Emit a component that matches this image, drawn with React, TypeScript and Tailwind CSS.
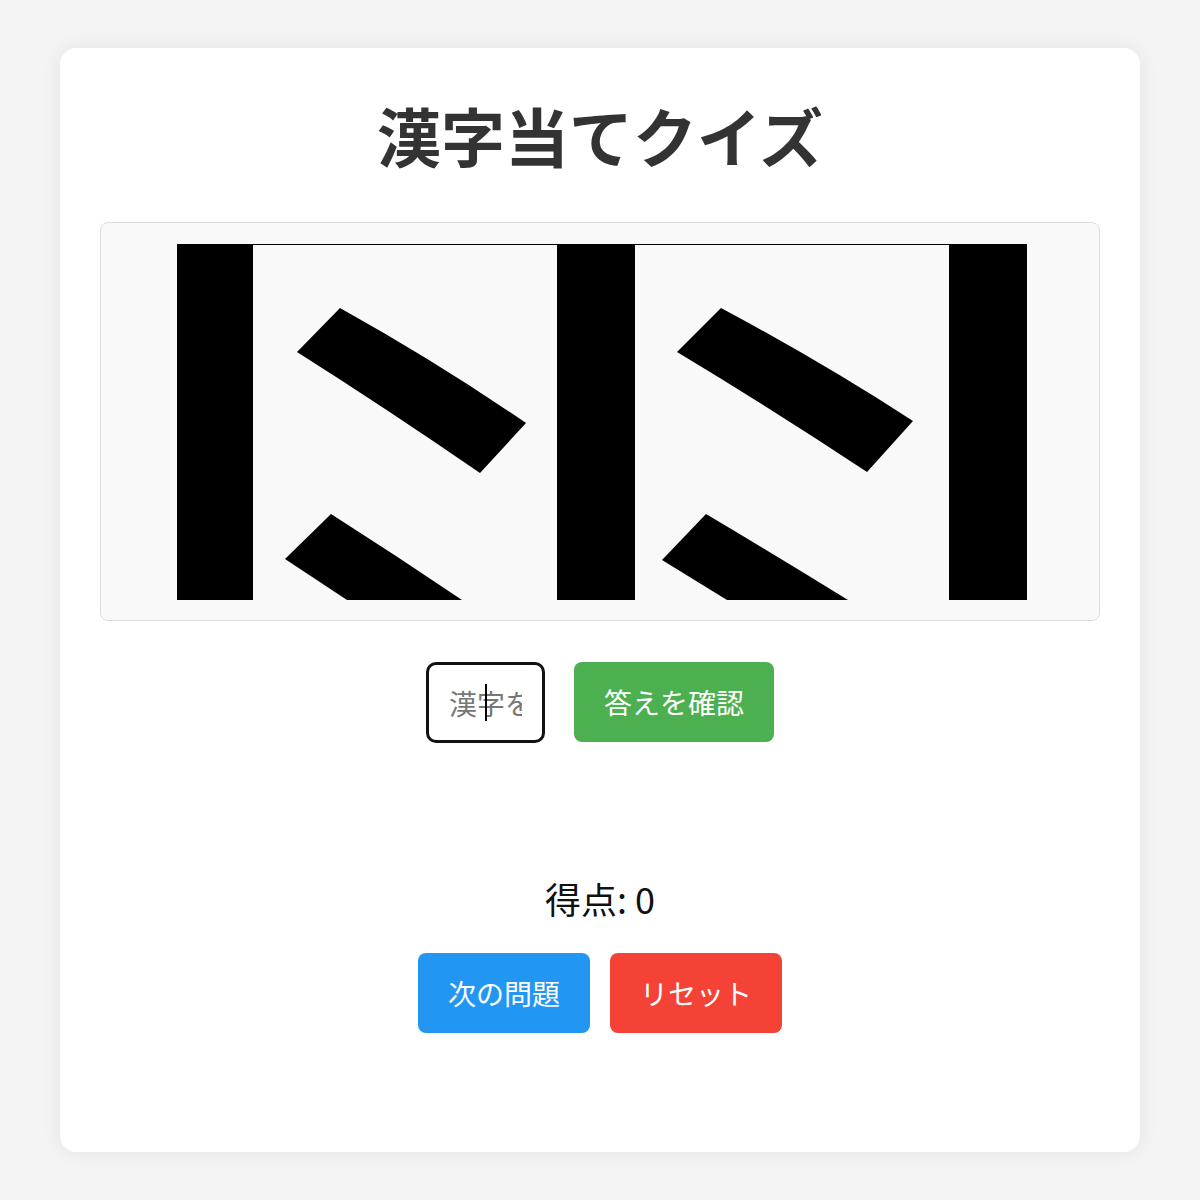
import React from "react";

const font = '"Noto Sans CJK JP", "Noto Sans", sans-serif';

function KanjiCanvas() {
  return (
    <svg width="850" height="356" viewBox="0 0 850 356" className="block ml-[4px]">
      <rect x="0" y="0" width="850" height="356" fill="#f9f9f9" />
      <rect x="0" y="0" width="850" height="1" fill="#000" />
      <rect x="0" y="0" width="76" height="356" fill="#000" />
      <rect x="380" y="0" width="78" height="356" fill="#000" />
      <rect x="772" y="0" width="78" height="356" fill="#000" />
      {/* left ticks */}
      <path d="M163 64 L120 108 Q210 165 303 229 L349 179 Q260 118 163 64 Z" fill="#000" />
      <path d="M154 270 L108 315 L170 356 L285 356 Q220 312 154 270 Z" fill="#000" />
      {/* right ticks */}
      <path d="M544 64 L500 108 Q595 165 690 228 L736 177 Q645 118 544 64 Z" fill="#000" />
      <path d="M529 270 L485 316 L550 356 L671 356 Q600 312 529 270 Z" fill="#000" />
    </svg>
  );
}

export default function App() {
  return (
    <div className="min-h-screen bg-[#f4f4f4] pt-[48px] px-[60px] pb-[48px]" style={{ fontFamily: font }}>
      <div className="bg-white rounded-[16px] shadow-[0_0_20px_rgba(0,0,0,0.08)] p-[40px] h-[1104px] flex flex-col">
        <h1 className="text-[64px] font-bold text-[#333] text-center leading-[93px] mb-[41px]">漢字当てクイズ</h1>
        <div className="border border-[#ddd] rounded-[8px] bg-[#f9f9f9] h-[399px] pt-[21px] flex justify-center">
          <KanjiCanvas />
        </div>
        <div className="mt-[41px] flex justify-center items-center gap-[29px]">
          <div className="relative">
            <input
              type="text"
              placeholder="漢字を入力"
              className="w-[119px] h-[81px] border-[3.5px] border-[#111] rounded-[10px] px-[20px] text-[28px] text-[#333] placeholder:text-[#777] outline-none bg-white"
              style={{ fontFamily: font }}
            />
            <span className="absolute left-[59px] top-[22px] w-[2px] h-[37px] bg-black" />
          </div>
          <button className="w-[200px] h-[80px] bg-[#4caf50] text-white text-[28px] rounded-[8px] leading-none -mt-[1px]">
            答えを確認
          </button>
        </div>
        <div className="h-[128px]" />
        <div className="text-center text-[36px] leading-[54px] text-[#111]">得点: 0</div>
        <div className="mt-[28px] flex justify-center gap-[20px]">
          <button className="w-[172px] h-[80px] bg-[#2196f3] text-white text-[28px] rounded-[8px] leading-none">次の問題</button>
          <button className="w-[172px] h-[80px] bg-[#f44336] text-white text-[28px] rounded-[8px] leading-none">リセット</button>
        </div>
      </div>
    </div>
  );
}
